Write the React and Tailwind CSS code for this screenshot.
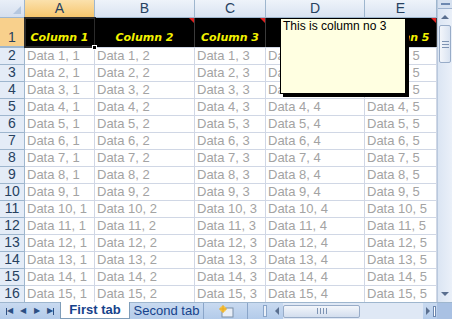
import React from "react";

const COLS = [
  { key: "A", w: 70 },
  { key: "B", w: 100 },
  { key: "C", w: 71 },
  { key: "D", w: 99 },
  { key: "E", w: 72 },
];

const ROWS = Array.from({ length: 15 }, (_, i) => i + 1);

function ColHeader({ label, w, active }) {
  return (
    <div
      style={{ width: w }}
      className={`h-[18px] shrink-0 flex items-center justify-center border-r border-b border-[#9eb6ce] text-[14px] text-[#27415f] ${
        active
          ? "bg-gradient-to-b from-[#fbe1ac] to-[#f6c66c]"
          : "bg-gradient-to-b from-[#eef3fa] to-[#d9e3f1]"
      }`}
    >
      {label}
    </div>
  );
}

function RowHeader({ n, h, active }) {
  return (
    <div
      style={{ height: h }}
      className={`w-[25px] shrink-0 flex items-end justify-center pb-px border-r border-b border-[#9eb6ce] text-[14px] leading-[15px] text-[#27415f] ${
        active ? "bg-[#f8d08c]" : "bg-[#e4ecf7]"
      }`}
    >
      {n}
    </div>
  );
}

export default function App() {
  return (
    <div className="w-[452px] h-[319px] overflow-hidden flex flex-col bg-white font-['Liberation_Sans',Arial,sans-serif]">
      <div className="flex h-[302px]">
        {/* sheet */}
        <div className="relative w-[437px] overflow-hidden">
          <div className="flex">
            <div className="relative w-[25px] h-[18px] shrink-0 border-r border-b border-[#9eb6ce] bg-gradient-to-b from-[#e9eff8] to-[#d5dfee]">
              <div className="absolute right-[3px] bottom-[3px] w-0 h-0 border-l-[8px] border-l-transparent border-b-[8px] border-b-[#b5c7df]" />
            </div>
            {COLS.map((c, i) => (
              <ColHeader key={c.key} label={c.key} w={c.w} active={i === 0} />
            ))}
          </div>

          {/* header row 1 */}
          <div className="flex">
            <RowHeader n={1} h={29} active />
            {COLS.map((c, i) => (
              <div
                key={c.key}
                style={{ width: c.w }}
                className={`relative h-[29px] shrink-0 bg-black flex items-end justify-center pb-[4px] border-r border-[#3a3a3a] ${
                  i === 0 ? "outline-2 outline-[#2b2b2b] -outline-offset-1" : ""
                }`}
              >
                <span className="text-[11px] leading-none font-bold italic text-[#f2f200] font-['DejaVu_Sans',Verdana,sans-serif] whitespace-nowrap">
                  Column {i + 1}
                </span>
                {i > 0 && (
                  <div className="absolute right-0 top-0 w-0 h-0 border-l-[5px] border-l-transparent border-t-[5px] border-t-[#e02020]" />
                )}
                {i === 0 && (
                  <div className="absolute -right-[3px] -bottom-[3px] w-[5px] h-[5px] bg-black border border-white z-10" />
                )}
              </div>
            ))}
          </div>
          <div className="flex h-px">
            <div className="w-[25px] bg-[#9eb6ce]" />
            <div className="w-[69px] bg-[#5a5a5a]" />
            <div className="flex-1 bg-[#d0d7e5]" />
          </div>

          {ROWS.map((r) => (
            <div key={r} className="flex">
              <RowHeader n={r + 1} h={17} />
              {COLS.map((c, i) => (
                <div
                  key={c.key}
                  style={{ width: c.w }}
                  className="h-[17px] shrink-0 border-r border-b border-[#d0d7e5] pl-[2px] text-[13px] leading-[16px] text-[#a3a3a3] whitespace-nowrap overflow-hidden"
                >
                  Data {r}, {i + 1}
                </div>
              ))}
            </div>
          ))}

          {/* comment tooltip */}
          <div className="absolute left-[280px] top-[18px] w-[126px] h-[76px] bg-[#ffffe1] border border-black shadow-[3px_3px_0_#000] px-[2px] text-[12px] leading-[14px] text-black z-20">
            This is column no 3
          </div>
        </div>

        {/* vertical scrollbar */}
        <div className="w-[15px] flex flex-col bg-gradient-to-r from-[#dbe5f3] to-[#eaf0f9] border-l border-[#b9c9de]">
          <div className="h-[9px] flex items-center justify-center bg-[#d6e1f0] border-b border-[#9fb3cf]">
            <div className="w-[9px] h-[2px] bg-[#6d88b0]" />
          </div>
          <div className="h-[16px] flex items-center justify-center">
            <div className="w-0 h-0 border-l-[4px] border-r-[4px] border-l-transparent border-r-transparent border-b-[4px] border-b-[#5a6f8f]" />
          </div>
          <div className="mx-px h-[38px] rounded-[2px] border border-[#98acc8] bg-gradient-to-r from-[#f3f6fb] to-[#d9e3f1] flex flex-col items-center justify-center gap-[2px]">
            <div className="w-[7px] h-px bg-[#7d93b3]" />
            <div className="w-[7px] h-px bg-[#7d93b3]" />
            <div className="w-[7px] h-px bg-[#7d93b3]" />
          </div>
          <div className="flex-1" />
          <div className="h-[16px] flex items-center justify-center">
            <div className="w-0 h-0 border-l-[4px] border-r-[4px] border-l-transparent border-r-transparent border-t-[4px] border-t-[#5a6f8f]" />
          </div>
        </div>
      </div>

      {/* tab bar */}
      <div className="h-[17px] flex items-stretch bg-gradient-to-b from-[#c9daf0] to-[#b3cbea] border-t border-[#9eb6ce]">
        <div className="w-[60px] flex items-center justify-around px-[2px] text-[#2c4f83] text-[8px]">
          <span className="flex items-center"><span className="w-px h-[7px] bg-[#2c4f83]" />◀</span>
          <span>◀</span>
          <span>▶</span>
          <span className="flex items-center">▶<span className="w-px h-[7px] bg-[#2c4f83]" /></span>
        </div>
        <div className="relative -mt-px w-[70px] bg-white border-x border-b border-[#7f9db9] flex items-center justify-center text-[13px] font-bold text-[#15428b]">
          First tab
        </div>
        <div className="w-[74px] flex items-center justify-center text-[13px] text-[#15428b] border-r border-[#8aa5c9]">
          Second tab
        </div>
        <div className="w-[44px] flex items-center justify-center border-r border-[#8aa5c9]">
          <svg width="16" height="13" viewBox="0 0 16 13">
            <rect x="4" y="3" width="11" height="9" fill="#e8eef7" stroke="#7b8fa8" />
            <circle cx="5" cy="4" r="3" fill="#f6c343" />
            <path d="M5 0v8M1 4h8" stroke="#e7a81f" strokeWidth="1" />
          </svg>
        </div>
        <div className="flex-1" />
        <div className="w-[4px] my-[2px] mr-[4px] bg-[#e9eff8] border border-[#8aa5c9]" />
        <div className="w-[12px] flex items-center justify-center">
          <div className="w-0 h-0 border-t-[4px] border-b-[4px] border-t-transparent border-b-transparent border-r-[4px] border-r-[#5a6f8f]" />
        </div>
        <div className="w-[140px] flex items-center bg-[#dfe8f5]">
          <div className="w-[77px] h-[13px] rounded-[2px] border border-[#98acc8] bg-gradient-to-b from-[#f3f6fb] to-[#d3deee] flex items-center justify-center gap-[2px]">
            <div className="w-px h-[6px] bg-[#7d93b3]" />
            <div className="w-px h-[6px] bg-[#7d93b3]" />
            <div className="w-px h-[6px] bg-[#7d93b3]" />
            <div className="w-px h-[6px] bg-[#7d93b3]" />
          </div>
        </div>
        <div className="w-[10px] flex items-center justify-center">
          <div className="w-0 h-0 border-t-[4px] border-b-[4px] border-t-transparent border-b-transparent border-l-[4px] border-l-[#5a6f8f]" />
        </div>
        <div className="w-[4px] flex items-center">
          <div className="w-[3px] h-[11px] bg-white border border-[#6d88b0]" />
        </div>
        <div className="w-[15px] bg-[#a9c1e3]" />
      </div>
    </div>
  );
}
